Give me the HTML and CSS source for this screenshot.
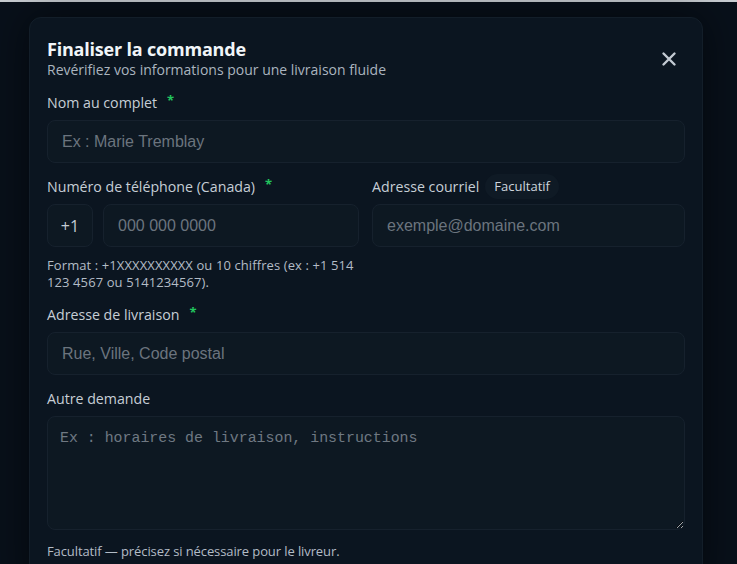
FILE: index.html
```html
<!DOCTYPE html>
<html lang="fr">
<head>
<meta charset="utf-8">
<title>Finaliser la commande</title>
<link rel="stylesheet" href="styles.css">
</head>
<body>
<div class="topline"></div>
<div class="page">
  <section class="modal">
    <header class="modal-head">
      <div class="head-text">
        <h1 class="title">Finaliser la commande</h1>
        <p class="subtitle">Revérifiez vos informations pour une livraison fluide</p>
      </div>
      <button class="close" type="button" aria-label="Fermer">
        <svg width="16" height="16" viewBox="0 0 16 16"><path d="M2.5 2.5 L13.5 13.5 M13.5 2.5 L2.5 13.5" stroke="#c3cad2" stroke-width="2.4" stroke-linecap="round"/></svg>
      </button>
    </header>

    <div class="fields">
      <div class="field">
        <label class="label">Nom au complet <span class="req">*</span></label>
        <input class="input" type="text" placeholder="Ex : Marie Tremblay">
      </div>

      <div class="two-col">
        <div class="field">
          <label class="label">Numéro de téléphone (Canada) <span class="req">*</span></label>
          <div class="phone-row">
            <span class="prefix">+1</span>
            <input class="input grow" type="tel" placeholder="000 000 0000">
          </div>
          <p class="hint">Format : +1XXXXXXXXXX ou 10 chiffres (ex : +1 514 123 4567 ou 5141234567).</p>
        </div>
        <div class="field">
          <label class="label">Adresse courriel <span class="pill">Facultatif</span></label>
          <input class="input" type="email" placeholder="exemple@domaine.com">
        </div>
      </div>

      <div class="field">
        <label class="label">Adresse de livraison <span class="req">*</span></label>
        <input class="input" type="text" placeholder="Rue, Ville, Code postal">
      </div>

      <div class="field">
        <label class="label">Autre demande</label>
        <textarea class="textarea" placeholder="Ex : horaires de livraison, instructions"></textarea>
        <p class="hint hint-foot">Facultatif — précisez si nécessaire pour le livreur.</p>
      </div>
    </div>
  </section>
</div>
</body>
</html>
```

FILE: styles.css
```css
html, body {
  margin: 0;
  padding: 0;
}
body {
  background: #08101a;
  font-family: "Open Sans", "Noto Sans", sans-serif;
  color: #c9d1d9;
  height: 564px;
  overflow: hidden;
}
.topline {
  height: 2px;
  background: #c8cdd2;
}
.page {
  padding: 15px 0 0 29px;
}
.modal {
  width: 638px;
  padding: 20px 17px 30px 17px;
  background: #0b1520;
  border: 1px solid #131e29;
  border-radius: 12px;
  box-shadow: 0 0 40px rgba(0, 0, 0, 0.55);
}
.modal-head {
  display: flex;
  align-items: center;
  justify-content: space-between;
}
.title {
  margin: 0;
  font-size: 18px;
  line-height: 22px;
  font-weight: 700;
  letter-spacing: -0.2px;
  color: #f1f5f9;
}
.subtitle {
  margin: 0;
  font-size: 14px;
  line-height: 20px;
  color: #aab4bf;
}
.close {
  width: 32px;
  height: 32px;
  display: flex;
  align-items: center;
  justify-content: center;
  background: transparent;
  border: 0;
  padding: 0;
}
.fields {
  margin-top: 12px;
  display: flex;
  flex-direction: column;
  gap: 13px;
}
.field {
  display: flex;
  flex-direction: column;
  min-width: 0;
}
.label {
  display: flex;
  align-items: center;
  gap: 6px;
  height: 20px;
  margin-bottom: 8px;
  font-size: 14.2px;
  color: #c6ced6;
}
.req {
  color: #22c55e;
  font-weight: 700;
  font-size: 13px;
  margin-left: 4px;
  position: relative;
  top: -2px;
}
.pill {
  font-size: 13px;
  line-height: 25px;
  height: 25px;
  padding: 0 9px;
  border-radius: 13px;
  background: #0f1a25;
  color: #cdd5dd;
}
.input {
  box-sizing: border-box;
  height: 43px;
  width: 100%;
  padding: 0 14px;
  background: #0d1822;
  border: 1px solid #16212d;
  border-radius: 8px;
  font-family: "Liberation Sans", Arial, sans-serif;
  font-size: 16px;
  color: #e2e8f0;
  outline: none;
}
.input::placeholder {
  color: #6b747e;
}
.two-col {
  display: grid;
  grid-template-columns: 312px 313px;
  column-gap: 13px;
}
.phone-row {
  display: flex;
  gap: 10px;
}
.prefix {
  box-sizing: border-box;
  width: 46px;
  height: 43px;
  flex: none;
  display: flex;
  align-items: center;
  justify-content: center;
  background: #0d1822;
  border: 1px solid #16212d;
  border-radius: 8px;
  font-size: 16px;
  color: #c4ccd4;
}
.grow {
  flex: 1;
  min-width: 0;
}
.hint {
  margin: 10px 0 0;
  font-size: 13px;
  letter-spacing: 0.1px;
  line-height: 17px;
  color: #b3bcc6;
}
.hint-foot {
  margin-top: 13px;
  letter-spacing: -0.1px;
}
.textarea {
  box-sizing: border-box;
  height: 114px;
  width: 100%;
  padding: 11px 12px;
  background: #0d1822;
  border: 1px solid #16212d;
  border-radius: 8px;
  font-family: "Liberation Mono", "DejaVu Sans Mono", monospace;
  font-size: 14.9px;
  line-height: 20px;
  color: #e2e8f0;
  resize: vertical;
  outline: none;
}
.textarea::placeholder {
  color: #6f7882;
}
```
